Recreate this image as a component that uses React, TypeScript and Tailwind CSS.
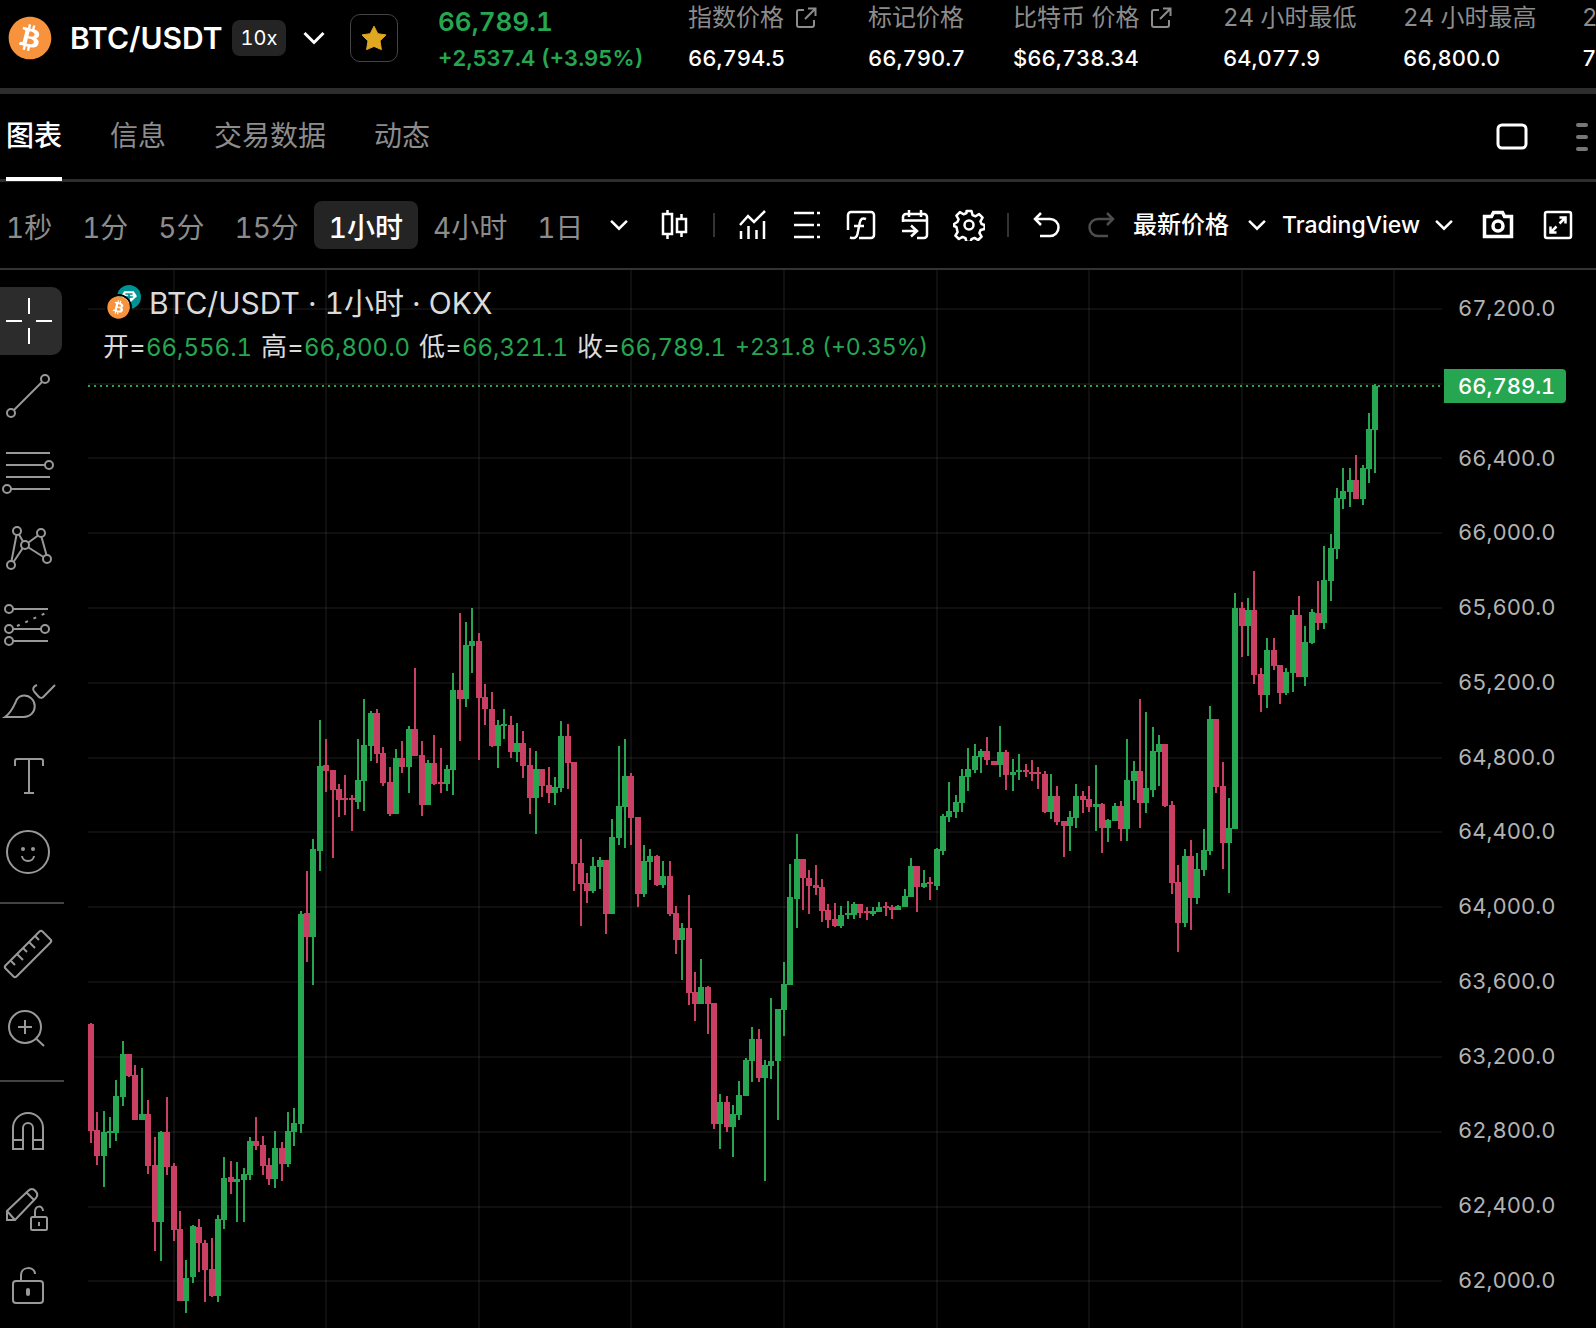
import type { ReactNode } from "react";
import { FaBitcoin } from "react-icons/fa";

const UP = "#26a650";
const DOWN = "#ca3f64";

/* ---------- chart data: [direction, high, body top, body bottom, low] ---------- */

type Candle = [0 | 1, number, number, number, number];

const candles: Candle[] = [
  [0, 1023, 1024, 1131, 1143], [0, 1112, 1130, 1156, 1165], [1, 1111, 1132, 1156, 1187], [1, 1117, 1131, 1133, 1148],
  [1, 1080, 1096, 1133, 1141], [1, 1041, 1054, 1097, 1106], [0, 1054, 1054, 1076, 1077], [0, 1065, 1075, 1120, 1120],
  [1, 1068, 1114, 1120, 1120], [0, 1100, 1114, 1166, 1174], [0, 1137, 1165, 1222, 1251], [1, 1131, 1132, 1222, 1261],
  [0, 1097, 1132, 1167, 1175], [0, 1163, 1166, 1230, 1241], [0, 1211, 1229, 1301, 1301], [1, 1260, 1278, 1301, 1313],
  [1, 1225, 1226, 1277, 1283], [0, 1219, 1227, 1243, 1272], [0, 1240, 1243, 1270, 1302], [0, 1238, 1269, 1296, 1297],
  [1, 1215, 1219, 1296, 1302], [1, 1157, 1178, 1220, 1229], [0, 1161, 1177, 1182, 1194], [1, 1162, 1179, 1182, 1222],
  [1, 1168, 1174, 1180, 1222], [1, 1137, 1141, 1175, 1180], [0, 1117, 1141, 1146, 1150], [0, 1136, 1145, 1166, 1175],
  [0, 1158, 1165, 1179, 1185], [1, 1131, 1148, 1179, 1188], [0, 1142, 1148, 1164, 1181], [1, 1112, 1131, 1164, 1167],
  [1, 1108, 1123, 1132, 1146], [1, 911, 914, 1124, 1133], [0, 871, 913, 937, 962], [1, 839, 849, 937, 985],
  [1, 720, 766, 851, 871], [0, 739, 765, 771, 792], [0, 770, 770, 790, 858], [0, 784, 789, 800, 817],
  [0, 775, 798, 800, 815], [0, 795, 798, 800, 831], [1, 739, 780, 802, 809], [1, 699, 745, 781, 811],
  [1, 711, 713, 746, 761], [0, 709, 713, 754, 763], [0, 747, 753, 783, 786], [0, 767, 782, 814, 816],
  [1, 749, 758, 814, 814], [0, 741, 758, 767, 773], [1, 726, 729, 767, 793], [0, 668, 729, 756, 756],
  [0, 741, 755, 805, 816], [1, 760, 763, 805, 805], [0, 735, 763, 784, 785], [0, 748, 782, 784, 793],
  [1, 765, 769, 784, 791], [1, 673, 690, 770, 795], [0, 613, 690, 699, 741], [1, 622, 645, 699, 707],
  [1, 608, 641, 646, 673], [0, 633, 641, 698, 760], [0, 684, 697, 709, 725], [0, 692, 709, 746, 747],
  [1, 720, 725, 746, 768], [1, 709, 724, 726, 739], [0, 716, 725, 752, 758], [1, 723, 743, 752, 762],
  [0, 731, 743, 766, 778], [0, 748, 765, 798, 814], [1, 751, 769, 798, 834], [0, 769, 769, 786, 797],
  [0, 767, 785, 793, 803], [1, 777, 787, 793, 805], [1, 721, 736, 788, 792], [0, 724, 736, 763, 789],
  [0, 762, 762, 864, 891], [0, 839, 863, 884, 926], [0, 873, 883, 891, 903], [1, 857, 866, 891, 893],
  [1, 857, 860, 867, 889], [0, 860, 860, 914, 934], [1, 819, 837, 914, 914], [1, 746, 806, 838, 845],
  [1, 739, 776, 807, 848], [0, 773, 776, 818, 845], [0, 817, 817, 894, 907], [1, 845, 861, 894, 897],
  [1, 849, 856, 862, 880], [0, 855, 856, 885, 886], [1, 861, 876, 885, 888], [0, 861, 876, 914, 916],
  [0, 906, 913, 940, 954], [1, 923, 928, 940, 980], [0, 895, 928, 993, 1005], [0, 972, 992, 1004, 1021],
  [1, 959, 987, 1004, 1004], [0, 986, 987, 1004, 1034], [0, 1003, 1003, 1124, 1129], [1, 1094, 1102, 1124, 1149],
  [0, 1096, 1102, 1127, 1132], [1, 1105, 1114, 1127, 1157], [1, 1081, 1095, 1115, 1120], [1, 1058, 1060, 1096, 1096],
  [1, 1027, 1039, 1061, 1082], [0, 1029, 1039, 1078, 1082], [1, 1060, 1065, 1078, 1181], [1, 998, 1061, 1066, 1079],
  [1, 1009, 1009, 1061, 1120], [1, 962, 984, 1010, 1036], [1, 864, 897, 985, 985], [1, 834, 859, 899, 928],
  [0, 859, 859, 878, 910], [0, 870, 878, 886, 914], [0, 865, 885, 888, 895], [0, 879, 887, 911, 922],
  [0, 904, 910, 920, 928], [0, 903, 919, 926, 927], [1, 906, 915, 926, 928], [1, 901, 913, 915, 919],
  [1, 902, 904, 915, 919], [0, 904, 904, 913, 918], [0, 907, 911, 913, 920], [1, 907, 911, 914, 916],
  [1, 902, 907, 912, 912], [0, 902, 906, 908, 916], [0, 905, 907, 910, 919], [1, 905, 906, 910, 910],
  [1, 889, 896, 907, 907], [1, 858, 866, 897, 897], [0, 866, 866, 887, 912], [1, 870, 883, 887, 888],
  [0, 877, 882, 884, 900], [1, 848, 849, 886, 890], [1, 814, 816, 851, 855], [1, 782, 811, 817, 822],
  [1, 795, 802, 812, 818], [1, 769, 776, 803, 812], [1, 748, 769, 777, 791], [1, 744, 756, 770, 773],
  [1, 749, 751, 757, 773], [0, 737, 751, 760, 765], [0, 761, 761, 765, 765], [1, 726, 752, 765, 777],
  [0, 750, 752, 775, 790], [1, 759, 772, 775, 791], [1, 754, 770, 772, 780], [0, 764, 770, 772, 777],
  [0, 760, 772, 774, 781], [0, 767, 772, 774, 789], [0, 771, 774, 812, 813], [1, 774, 796, 812, 819],
  [0, 786, 796, 822, 825], [0, 821, 821, 826, 857], [1, 811, 817, 826, 851], [1, 784, 796, 818, 828],
  [0, 791, 796, 800, 813], [0, 786, 799, 807, 812], [1, 765, 804, 807, 831], [0, 803, 804, 828, 853],
  [1, 819, 820, 828, 842], [1, 803, 806, 821, 821], [0, 801, 806, 829, 841], [1, 739, 780, 829, 841],
  [1, 761, 771, 781, 800], [0, 699, 771, 803, 828], [1, 712, 788, 803, 813], [1, 727, 751, 790, 797],
  [1, 735, 744, 752, 786], [0, 744, 744, 806, 807], [0, 801, 805, 883, 894], [0, 865, 882, 923, 952],
  [1, 849, 856, 923, 927], [0, 840, 856, 898, 930], [1, 853, 869, 898, 904], [1, 829, 850, 870, 876],
  [1, 706, 719, 851, 855], [0, 719, 719, 787, 793], [0, 762, 786, 843, 869], [1, 798, 828, 843, 893],
  [1, 593, 608, 829, 829], [0, 602, 608, 626, 657], [1, 598, 610, 626, 656], [0, 571, 610, 675, 684],
  [0, 668, 674, 695, 712], [1, 638, 650, 695, 708], [0, 638, 650, 666, 670], [0, 665, 665, 693, 704],
  [1, 668, 672, 693, 695], [1, 610, 615, 673, 692], [0, 596, 615, 677, 677], [1, 626, 642, 677, 686],
  [1, 609, 612, 643, 644], [0, 581, 613, 623, 630], [1, 546, 580, 623, 629], [1, 534, 548, 581, 601],
  [1, 488, 498, 549, 559], [1, 468, 491, 499, 509], [1, 468, 480, 492, 507], [0, 455, 480, 499, 499],
  [1, 465, 468, 499, 505], [1, 413, 429, 469, 483], [1, 384, 386, 430, 473],
];

const candleX = (i: number) => Math.floor(174.1 + (i - 13) * 6.358);
const gridX = [174, 326, 479, 631, 784, 937, 1089, 1242, 1394];
const gridY = [309, 384, 458, 533, 608, 683, 758, 832, 907, 982, 1057, 1132, 1207, 1281];
const axis = [
  "67,200.0", "", "66,400.0", "66,000.0", "65,600.0", "65,200.0", "64,800.0",
  "64,400.0", "64,000.0", "63,600.0", "63,200.0", "62,800.0", "62,400.0", "62,000.0",
];

function CandleChart() {
  return (
    <svg viewBox="88 270 1354 1058" className="block h-auto w-full" shapeRendering="crispEdges" role="img" aria-label="BTC/USDT 1小时 K线图">
      <g fill="#fff" fillOpacity="0.06">
        {gridX.map((x) => <rect key={x} x={x - 1} y={270} width={2} height={1058} />)}
        {gridY.map((y) => <rect key={y} x={88} y={y - 1} width={1354} height={2} />)}
      </g>
      <line x1={88} x2={1441} y1={386} y2={386} stroke={UP} strokeWidth={2} strokeDasharray="2 4" />
      {candles.map(([up, high, top, bottom, low], i) => (
        <g key={i} fill={up ? UP : DOWN}>
          <rect x={candleX(i) - 1} y={high} width={2} height={low - high} />
          <rect x={candleX(i) - 3} y={top} width={6} height={bottom - top} />
        </g>
      ))}
    </svg>
  );
}

/* ---------- icons ---------- */

function Btc({ className }: { className: string }) {
  return (
    <span className={`grid place-items-center rounded-full bg-[radial-gradient(circle,#fff_60%,transparent_62%)] text-[#f7933c] ${className}`}>
      <FaBitcoin className="size-full" />
    </span>
  );
}

function Tether() {
  return (
    <svg viewBox="0 0 24 24" className="size-6" aria-hidden>
      <circle cx="12" cy="12" r="12" fill="#009393" />
      <path d="M7.2 6.2h9.6l3.2 5-8 7.6-8-7.6z" fill="#fff" />
      <path d="M8.4 8.2h7.2v1.6h-2.7v1.2c2 .1 3.500.5 3.500 1s-1.500.9-3.500 1v3.200h-1.800V13c-2-.1-3.500-.5-3.500-1s1.500-.9 3.500-1V9.800H8.400z" fill="#009393" />
    </svg>
  );
}

function Chevron({ size, width = 2 }: { size: number; width?: number }) {
  return (
    <svg width={size} height={size} viewBox="0 0 24 24" fill="none" stroke="currentColor" strokeWidth={width} aria-hidden>
      <path d="M2.500 7l9.500 9.500L21.500 7" />
    </svg>
  );
}

function ExternalIcon() {
  return (
    <svg width="22" height="22" viewBox="0 0 22 22" fill="none" stroke="currentColor" strokeWidth="2" aria-hidden>
      <path d="M9 3H4a2 2 0 0 0-2 2v13a2 2 0 0 0 2 2h13a2 2 0 0 0 2-2v-5M13 1.500h7.500V9M20 2L10 12" />
    </svg>
  );
}

function BarIcon({ children }: { children: ReactNode }) {
  return (
    <svg viewBox="0 0 32 32" className="size-8" fill="none" stroke="currentColor" strokeWidth="2.500" aria-hidden>
      {children}
    </svg>
  );
}

function BarButton({ label, dim, children }: { label: string; dim?: boolean; children: ReactNode }) {
  return (
    <button type="button" aria-label={label} className={dim ? "shrink-0 text-[#4d4d4d]" : "shrink-0 text-white"}>
      <BarIcon>{children}</BarIcon>
    </button>
  );
}

function SideButton({ label, active, children }: { label: string; active?: boolean; children: ReactNode }) {
  return (
    <button
      type="button"
      aria-label={label}
      className={active ? "my-1 block h-[68px] w-[62px] overflow-hidden rounded-r-[10px] bg-[#2c2c2c] text-white" : "block h-[76px] w-[62px] text-[#999]"}
    >
      <svg viewBox={active ? "0 4 62 68" : "0 0 62 76"} className="block size-full" fill="none" stroke="currentColor" strokeWidth="2" aria-hidden>
        {children}
      </svg>
    </button>
  );
}

/* ---------- header ---------- */

const stats = [
  { label: "指数价格", value: "66,794.5", link: true, width: "w-[180px]" },
  { label: "标记价格", value: "66,790.7", link: false, width: "w-[145px]" },
  { label: "比特币 价格", value: "$66,738.34", link: true, width: "w-[210px]" },
  { label: "24 小时最低", value: "64,077.9", link: false, width: "w-[180px]" },
  { label: "24 小时最高", value: "66,800.0", link: false, width: "w-[179px]" },
  { label: "24 小时量", value: "7,120.4", link: false, width: "w-[145px]" },
];

function Header() {
  return (
    <header className="flex h-[94px] items-start overflow-hidden border-b-[6px] border-[#2d2d2d] whitespace-nowrap">
      <div className="flex h-[76px] w-[438px] shrink-0 items-center pl-2">
        <Btc className="size-[44px]" />
        <h1 className="ml-[18px] w-[162px] text-[30px] leading-10 font-semibold">BTC/USDT</h1>
        <span className="w-[54px] rounded-lg bg-[#242424] text-center text-[20px] leading-9">10x</span>
        <button type="button" aria-label="选择币对" className="ml-4"><Chevron size={24} width={3} /></button>
        <button type="button" aria-label="收藏" className="ml-6 grid size-12 place-items-center rounded-[10px] border border-[#444]">
          <svg viewBox="0 0 26 26" className="size-[26px]" fill="#e0a820" stroke="#e0a820" strokeWidth="1" strokeLinejoin="round" aria-hidden>
            <path d="M13 1.200l3.800 7.500 8.200 1.200-6 6 1.400 8.700L13 21.400l-7.400 3.200L7 15.900l-6-6 8.200-1.200z" />
          </svg>
        </button>
      </div>
      <div className="w-[250px] shrink-0 font-semibold text-[#26a650]">
        <p className="pt-1 text-[26px] leading-9">66,789.1</p>
        <p className="text-[22px] leading-9">+2,537.4 (+3.95%)</p>
      </div>
      <dl className="flex">
        {stats.map((s) => (
          <div key={s.label} className={`shrink-0 ${s.width}`}>
            <dt className="flex h-9 items-center text-[24px] text-[#8c8c8c]">
              {s.label}
              {s.link && <a href="#price" aria-label={s.label} className="ml-[11px]"><ExternalIcon /></a>}
            </dt>
            <dd className="pt-1 text-[22px] leading-9 font-medium">{s.value}</dd>
          </div>
        ))}
      </dl>
    </header>
  );
}

/* ---------- tabs ---------- */

const tabs = ["图表", "信息", "交易数据", "动态"];

function Tabs() {
  return (
    <div className="flex h-[88px] border-b-[3px] border-[#2d2d2d]">
      <nav className="flex flex-1 gap-12 pl-1.5 text-[28px]">
        {tabs.map((t, i) => (
          <button key={t} type="button" className={i === 0 ? "h-[87px] border-b-4 border-white font-medium text-white" : "h-[87px] border-b-4 border-transparent text-[#8c8c8c]"}>
            {t}
          </button>
        ))}
      </nav>
      <button type="button" aria-label="布局" className="mr-12">
        <svg width="32" height="28" viewBox="0 0 32 28" fill="none" stroke="#fff" strokeWidth="3" aria-hidden>
          <rect x="2" y="2" width="28" height="23" rx="4" />
        </svg>
      </button>
      <button type="button" aria-label="更多" className="mr-2">
        <svg width="12" height="28" viewBox="0 0 12 28" fill="#777" aria-hidden>
          <rect width="12" height="4" rx="2" />
          <rect y="12" width="12" height="4" rx="2" />
          <rect y="24" width="12" height="4" rx="2" />
        </svg>
      </button>
    </div>
  );
}

/* ---------- toolbar ---------- */

const intervals = ["1秒", "1分", "5分", "15分", "1小时", "4小时", "1日"];

function Divider() {
  return <span className="mx-[22px] h-6 w-0.5 shrink-0 bg-[#333]" />;
}

function Picker({ label, value, className }: { label: string; value: string; className: string }) {
  return (
    <label className={`relative flex shrink-0 items-center ${className}`}>
      <select aria-label={label} defaultValue={value} className="w-full appearance-none bg-transparent leading-8 font-medium text-white outline-none">
        <option>{value}</option>
      </select>
      <span className="pointer-events-none absolute right-0"><Chevron size={20} width={3} /></span>
    </label>
  );
}

function Toolbar() {
  return (
    <div className="flex h-[88px] items-center overflow-hidden border-b-2 border-[#333] whitespace-nowrap">
      <div className="-ml-[9px] flex w-[668px] shrink-0 items-center text-[28px]">
        {intervals.map((t) => (
          <button
            key={t}
            type="button"
            className={t === "1小时" ? "h-12 rounded-lg bg-[#242424] px-[15px] pt-1.5 font-medium text-white" : "h-12 px-[15px] pt-1.5 text-[#8c8c8c]"}
          >
            {t}
          </button>
        ))}
        <button type="button" aria-label="更多周期" className="ml-[11px]"><Chevron size={20} width={3} /></button>
      </div>
      <BarButton label="图表类型">
        <path d="M4 5h9v20H4zM8.500 1v4M8.500 25v5M18 10h9v13h-9zM22.500 5v5M22.500 23v5" />
      </BarButton>
      <Divider />
      <div className="flex gap-[22px]">
        <BarButton label="指标">
          <path d="M3 16l8-9 6 6L28 2M4 22v8M11.500 17v13M19.500 21v9M27 12v18" />
        </BarButton>
        <BarButton label="指标模板">
          <path d="M3 4h20M3 16h20M3 28h20M26 4h3M26 16h3M26 28h3" />
        </BarButton>
        <BarButton label="公式">
          <path d="M3 21V6a3 3 0 0 1 3-3h20a3 3 0 0 1 3 3v20a3 3 0 0 1-3 3H14" />
          <path d="M21 10c-3.500-1.500-5.500 0-6.200 3.500L12.500 25c-.7 3.500-3 5-7.500 3.500M9 17h10" />
        </BarButton>
        <BarButton label="跳转日期">
          <path d="M4 13V8a3 3 0 0 1 3-3h18a3 3 0 0 1 3 3v18a3 3 0 0 1-3 3h-7M4 11.500h24M10 1v7M22 1v7M3 22h14M12 16.500l6 5.500-6 5.500" />
        </BarButton>
        <BarButton label="设置">
          <path d="M13.500 2h5l1 4 3 1.300 3.600-2.200 3.500 3.600-2.200 3.600 1.200 2.700 3 1v4l-4 1-1.200 3 2.200 3.600-3.500 3.400-3.600-2.100-3 1.200-1 3h-4l-1-4-3-1.200-3.600 2.100-3.500-3.400 2.200-3.600L3.400 18l-2.400-1v-2l3.400-2 1.200-2.700-2.200-3.600 3.500-3.600 3.600 2.200 3-1.300z" strokeLinejoin="round" />
          <circle cx="16" cy="16" r="4.500" />
        </BarButton>
      </div>
      <Divider />
      <div className="flex gap-[22px]">
        <BarButton label="撤销">
          <path d="M10 4L4 10l6 6M4 10h15a8.500 8.500 0 0 1 0 17H9" />
        </BarButton>
        <BarButton label="重做" dim>
          <path d="M22 4l6 6-6 6M28 10H13a8.500 8.500 0 0 0 0 17h10" />
        </BarButton>
      </div>
      <Picker label="价格类型" value="最新价格" className="ml-4 w-[134px] text-[24px]" />
      <Picker label="图表引擎" value="TradingView" className="ml-[15px] w-[172px] text-[23px]" />
      <div className="ml-7 flex gap-7">
        <BarButton label="截图">
          <path d="M2.500 7.500h7l2-4h9l2 4h7v20h-27z" strokeWidth="3.500" />
          <circle cx="16" cy="17" r="5" strokeWidth="3.500" />
        </BarButton>
        <BarButton label="全屏">
          <rect x="3" y="3" width="26" height="26" rx="2" />
          <path d="M17.500 8.500h6v6M23 9l-5.500 5.500M14.500 23.500h-6v-6M9 23l5.500-5.500" />
        </BarButton>
      </div>
    </div>
  );
}

/* ---------- drawing tools ---------- */

function SideBar() {
  return (
    <aside className="w-[88px] shrink-0 pt-[13px]">
      <SideButton label="十字光标" active>
        <path d="M29 15v16M29 45v16M6 38h16M36 38h16" />
      </SideButton>
      <SideButton label="趋势线">
        <circle cx="45" cy="20" r="4" /><circle cx="11" cy="54" r="4" />
        <path d="M42 23L14 51" />
      </SideButton>
      <SideButton label="斐波那契">
        <path d="M6 18h44M6 30h39M6 42h44M11 54h39" />
        <circle cx="49" cy="30" r="4" /><circle cx="7" cy="54" r="4" />
      </SideButton>
      <SideButton label="形态">
        <circle cx="17" cy="20" r="4" /><circle cx="41" cy="22" r="4" /><circle cx="25" cy="34" r="4" />
        <circle cx="11" cy="54" r="4" /><circle cx="47" cy="48" r="4" />
        <path d="M16.500 24L11.500 50M19 23.500l4 7M28.500 31.500L38 24.500M22.500 37.500L13.500 51M28.500 36.500l15 9.500M41.500 26l5 18" />
      </SideButton>
      <SideButton label="预测">
        <circle cx="9" cy="22" r="4" /><circle cx="9" cy="42" r="4" /><circle cx="9" cy="54" r="4" /><circle cx="45" cy="42" r="4" />
        <path d="M13 22h35M13 42h28M13 54h35" />
        <path d="M17 39L46 26" strokeDasharray="3 6" />
      </SideButton>
      <SideButton label="画笔">
        <path d="M5 54c6-4 8-9 10.500-14.500C17 35 20 32.500 24 32.500a10.500 10.500 0 0 1 0 21.500z" />
        <path d="M37 22c-4 1.500-5 4.500-2.500 7l4 4.500c1.500 1.800 3.500 1.800 5 .2L55 22" />
      </SideButton>
      <SideButton label="文字">
        <path d="M15 27v-5q0-2 2-2h24q2 0 2 2v5M29 20v34M24 54h10" />
      </SideButton>
      <SideButton label="表情">
        <circle cx="28" cy="37" r="21" />
        <path d="M22 41c.5 6.500 11.500 6.500 12 0" />
        <circle cx="23" cy="34" r="2" fill="currentColor" stroke="none" /><circle cx="33" cy="34" r="2" fill="currentColor" stroke="none" />
      </SideButton>
      <hr className="mt-[11px] mb-[13px] w-16 border-t-2 border-[#434343]" />
      <SideButton label="测量">
        <path d="M39.500 14.500q1.500-1.500 3 0l8 8q1.500 1.500 0 3l-34 34q-1.500 1.500-3 0l-8-8q-1.500-1.500 0-3z" />
        <path d="M11 44l4 4M17 37l6 6M23 31l4 4M29 25l6 6M35 19l4 4" />
      </SideButton>
      <SideButton label="放大">
        <circle cx="25" cy="34" r="16" />
        <path d="M18 34h14M25 27v14M36.500 46l7.500 7" />
      </SideButton>
      <hr className="mt-[11px] mb-[13px] w-16 border-t-2 border-[#434343]" />
      <SideButton label="磁铁">
        <path d="M13 54V33a15 15 0 0 1 30 0v21H33V33a5 5 0 0 0-10 0v21zM13 45h10M33 45h10" />
      </SideButton>
      <SideButton label="锁定绘图模式">
        <path d="M7 49v-9l21-20q4-4 7.500 0t0 7.500L15 49zM7 40l8 9M26.500 21.500l8 8" />
        <rect x="31" y="46" width="16" height="13" rx="1.500" />
        <path d="M35 46v-5c0-7 8-7 8-1M39 51v4" />
      </SideButton>
      <SideButton label="锁定所有图形">
        <rect x="13" y="34" width="30" height="22" rx="3" />
        <path d="M21 34v-6c0-9 14-9 14-1" />
        <rect x="26" y="41" width="4" height="8" rx="2" fill="currentColor" stroke="none" />
      </SideButton>
    </aside>
  );
}

/* ---------- chart overlay ---------- */

const ohlc = [
  ["开", "66,556.1"],
  ["高", "66,800.0"],
  ["低", "66,321.1"],
  ["收", "66,789.1"],
];

function Legend() {
  return (
    <div className="absolute top-3 left-[15px] whitespace-nowrap text-[#dbdbdb]">
      <div className="flex h-[42px] items-center">
        <div className="relative h-9 w-[46px]">
          <span className="absolute top-0 left-[14px]"><Tether /></span>
          <span className="absolute top-[9px] left-0.5 rounded-full border-2 border-black"><Btc className="size-[23px]" /></span>
        </div>
        <h2 className="text-[30px] leading-10">BTC/USDT · 1小时 · OKX</h2>
      </div>
      <div className="flex h-[46px] items-center text-[23px] leading-8">
        {ohlc.map(([k, v]) => (
          <span key={k} className="w-[158px]">
            <span className="text-[26px]">{k}=</span>
            <span className="text-[24px] text-[#26a650]">{v}</span>
          </span>
        ))}
        <span className="text-[#26a650]">+231.8 (+0.35%)</span>
      </div>
    </div>
  );
}

export default function App() {
  return (
    <div className="min-h-screen overflow-hidden bg-black font-[Inter,'Noto_Sans_CJK_SC',sans-serif] text-white tabular-nums">
      <Header />
      <Tabs />
      <Toolbar />
      <main className="flex items-start">
        <SideBar />
        <section className="relative min-w-0 flex-1">
          <CandleChart />
          <Legend />
        </section>
        <aside className="relative w-[154px] shrink-0 pt-[26px] pl-4 text-[22px] text-[#b3b3b3]">
          <div className="flex h-[996px] flex-col justify-between">
            {axis.map((p, i) => <span key={i} className="block h-6 leading-6">{p}</span>)}
          </div>
          <span className="absolute top-[99px] left-0.5 w-[122px] rounded-r bg-[#26a650] pl-[14px] leading-[34px] font-medium text-white">66,789.1</span>
        </aside>
      </main>
    </div>
  );
}
